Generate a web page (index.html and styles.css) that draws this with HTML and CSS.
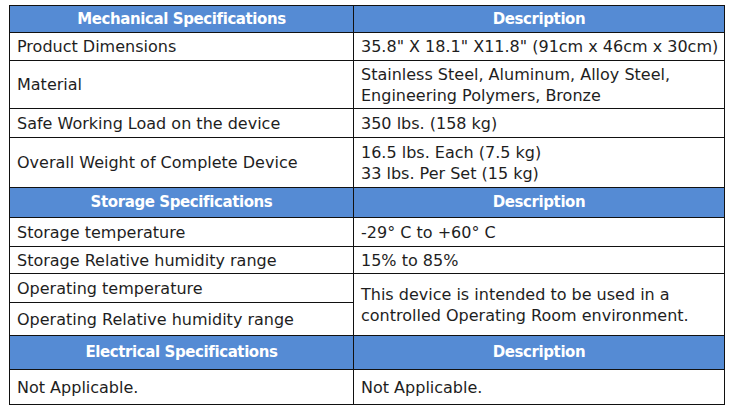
FILE: index.html
```html
<!DOCTYPE html>
<html lang="en">
<head>
<meta charset="utf-8">
<title>Specifications</title>
<link rel="stylesheet" href="styles.css">
</head>
<body>
<table class="spec">
  <tbody>
    <tr class="head h27">
      <th class="c1">Mechanical Specifications</th>
      <th class="c2">Description</th>
    </tr>
    <tr class="h28">
      <td>Product Dimensions</td>
      <td>35.8" X 18.1" X11.8" (91cm x 46cm x 30cm)</td>
    </tr>
    <tr class="h48">
      <td>Material</td>
      <td>Stainless Steel, Aluminum, Alloy Steel,<br>Engineering Polymers, Bronze</td>
    </tr>
    <tr class="h29">
      <td>Safe Working Load on the device</td>
      <td>350 lbs. (158 kg)</td>
    </tr>
    <tr class="h50">
      <td>Overall Weight of Complete Device</td>
      <td>16.5 lbs. Each (7.5 kg)<br>33 lbs. Per Set (15 kg)</td>
    </tr>
    <tr class="head h30">
      <th>Storage Specifications</th>
      <th>Description</th>
    </tr>
    <tr class="h29">
      <td>Storage temperature</td>
      <td>-29° C to +60° C</td>
    </tr>
    <tr class="h27">
      <td>Storage Relative humidity range</td>
      <td>15% to 85%</td>
    </tr>
    <tr class="h29">
      <td>Operating temperature</td>
      <td rowspan="2">This device is intended to be used in a<br>controlled Operating Room environment.</td>
    </tr>
    <tr class="h33">
      <td>Operating Relative humidity range</td>
    </tr>
    <tr class="head h34">
      <th>Electrical Specifications</th>
      <th>Description</th>
    </tr>
    <tr class="h35">
      <td>Not Applicable.</td>
      <td>Not Applicable.</td>
    </tr>
  </tbody>
</table>
</body>
</html>
```

FILE: styles.css
```css
html, body {
  margin: 0;
  padding: 0;
  background: #ffffff;
}

body {
  padding: 5px 0 0 9px;
  font-family: "DejaVu Sans", "Liberation Sans", sans-serif;
  font-size: 16px;
  color: #1e1e1e;
}

.spec {
  border-collapse: separate;
  border-spacing: 0;
  table-layout: fixed;
  width: 716px;
  border-top: 1px solid #111;
  border-left: 1px solid #111;
}

.spec th,
.spec td {
  box-sizing: border-box;
  border-right: 1px solid #111;
  border-bottom: 1px solid #111;
  padding: 0 4px 0 7px;
  vertical-align: middle;
  line-height: 21px;
  white-space: nowrap;
  overflow: hidden;
}

.spec .c1 { width: 344px; }
.spec .c2 { width: 371px; }

.spec th {
  background: #558bd4;
  color: #ffffff;
  font-weight: bold;
  font-size: 15px;
  letter-spacing: -0.4px;
  text-align: center;
  padding: 0;
}

.h27 { height: 27px; }
.h28 { height: 28px; }
.h29 { height: 29px; }
.h30 { height: 30px; }
.h33 { height: 33px; }
.h34 { height: 34px; }
.h35 { height: 35px; }
.h48 { height: 48px; }
.h50 { height: 50px; }
```
